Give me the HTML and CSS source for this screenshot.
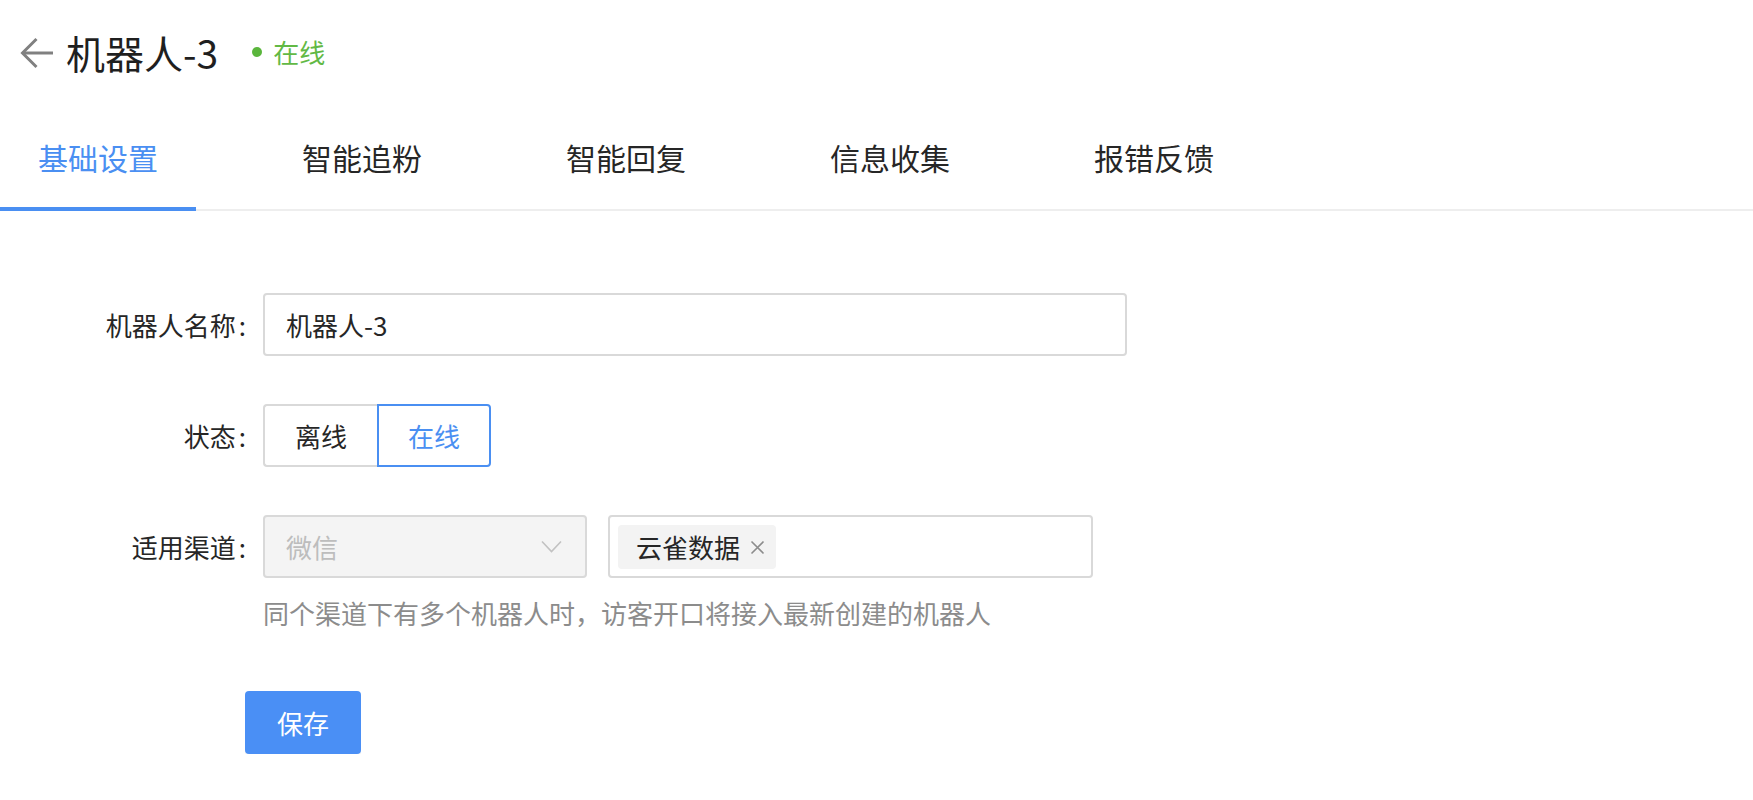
FILE: index.html
```html
<!DOCTYPE html>
<html lang="zh-CN">
<head>
<meta charset="utf-8">
<title>机器人-3</title>
<link rel="stylesheet" href="styles.css">
</head>
<body>
<div class="page">
  <header class="header">
    <span class="back">
      <svg width="34" height="34" viewBox="0 0 34 34" fill="none" stroke="#808080" stroke-width="3" stroke-linecap="butt" stroke-linejoin="miter">
        <path d="M34 17H3.5"/>
        <path d="M17.5 3L3.5 17l14 14"/>
      </svg>
    </span>
    <h1 class="title">机器人-3</h1>
    <span class="status"><span class="dot"></span>在线</span>
  </header>

  <nav class="tabs">
    <div class="tab active">基础设置</div>
    <div class="tab">智能追粉</div>
    <div class="tab">智能回复</div>
    <div class="tab">信息收集</div>
    <div class="tab">报错反馈</div>
  </nav>

  <div class="form">
    <div class="row">
      <div class="label">机器人名称<span class="colon">:</span></div>
      <div class="input">机器人-3</div>
    </div>

    <div class="row">
      <div class="label">状态<span class="colon">:</span></div>
      <div class="radio-group">
        <span class="radio">离线</span>
        <span class="radio checked">在线</span>
      </div>
    </div>

    <div class="row row-top">
      <div class="label">适用渠道<span class="colon">:</span></div>
      <div class="control">
        <div class="channel">
          <div class="select">
            <span class="placeholder">微信</span>
            <svg class="chevron" width="21" height="13" viewBox="0 0 21 13" fill="none" stroke="#c2c2c2" stroke-width="1.6">
              <path d="M1 1.5l9.5 10 9.5-10"/>
            </svg>
          </div>
          <div class="tags">
            <span class="tag">云雀数据<svg class="close" width="15" height="15" viewBox="0 0 15 15" stroke="#8c8c8c" stroke-width="1.6"><path d="M1.5 1.5l12 12M13.5 1.5l-12 12"/></svg></span>
          </div>
        </div>
        <div class="help">同个渠道下有多个机器人时，访客开口将接入最新创建的机器人</div>
      </div>
    </div>

    <div class="actions">
      <button class="btn" type="button">保存</button>
    </div>
  </div>
</div>
</body>
</html>
```

FILE: styles.css
```css
html, body {
  margin: 0;
  padding: 0;
  background: #ffffff;
}

body {
  font-family: "Noto Sans CJK SC", "Noto Sans", sans-serif;
  color: #262626;
}

.page {
  width: 100%;
}

.header {
  height: 104px;
  display: flex;
  align-items: center;
  padding-left: 19px;
  box-sizing: border-box;
}

.back {
  display: flex;
  width: 34px;
  height: 34px;
  margin-top: 1px;
}

.title {
  margin: 0 0 0 13px;
  font-size: 39px;
  font-weight: 400;
  color: #1f1f1f;
  line-height: 1;
}

.status {
  display: flex;
  align-items: center;
  margin-left: 34px;
  font-size: 26px;
  color: #62b945;
  line-height: 1;
}

.dot {
  width: 10px;
  height: 10px;
  border-radius: 50%;
  background: #5ab63c;
  margin-right: 11px;
}

.tabs {
  display: flex;
  gap: 68px;
  border-bottom: 2px solid #eeeeee;
  height: 105px;
}

.tab {
  height: 107px;
  box-sizing: border-box;
  padding: 3px 38px 0;
  display: flex;
  align-items: center;
  font-size: 30px;
  color: #262626;
  border-bottom: 4px solid transparent;
  line-height: 1;
}

.tab.active {
  color: #4a8ff2;
  border-bottom-color: #4a8ff2;
}

.form {
  padding-top: 82px;
  font-size: 26px;
}

.row {
  display: flex;
  align-items: center;
  margin-bottom: 48px;
}

.row-top {
  align-items: flex-start;
}

.label {
  width: 246px;
  height: 63px;
  line-height: 63px;
  text-align: right;
  padding-right: 17px;
  box-sizing: content-box;
  color: #262626;
  flex-shrink: 0;
}

.colon {
  margin-left: 3px;
}

.input {
  width: 864px;
  height: 63px;
  box-sizing: border-box;
  border: 2px solid #d9d9d9;
  border-radius: 4px;
  padding-left: 21px;
  line-height: 59px;
  color: #262626;
}

.radio-group {
  display: flex;
}

.radio {
  width: 114px;
  height: 63px;
  box-sizing: border-box;
  display: flex;
  align-items: center;
  justify-content: center;
  border: 2px solid #d9d9d9;
  color: #262626;
}

.radio:first-child {
  border-right: none;
  border-radius: 4px 0 0 4px;
}

.radio.checked {
  border-color: #4a8ff2;
  color: #4a8ff2;
  border-radius: 0 4px 4px 0;
}

.control {
  display: flex;
  flex-direction: column;
}

.channel {
  display: flex;
  gap: 21px;
}

.select {
  width: 324px;
  height: 63px;
  box-sizing: border-box;
  border: 2px solid #d9d9d9;
  border-radius: 4px;
  background: #f4f4f4;
  padding: 0 23px 0 21px;
  display: flex;
  align-items: center;
  justify-content: space-between;
}

.placeholder {
  color: #bdbdbd;
}

.chevron {
  display: block;
}

.tags {
  width: 485px;
  height: 63px;
  box-sizing: border-box;
  border: 2px solid #d9d9d9;
  border-radius: 4px;
  padding: 0 8px;
  display: flex;
  align-items: center;
}

.tag {
  height: 44px;
  box-sizing: border-box;
  padding: 0 11px 0 18px;
  background: #f3f3f3;
  border-radius: 4px;
  display: flex;
  align-items: center;
  color: #262626;
}

.close {
  display: block;
  margin-left: 10px;
  margin-top: 2px;
}

.help {
  margin-top: 17px;
  line-height: 36px;
  color: #8c8c8c;
}

.actions {
  padding-left: 245px;
  margin-top: -48px;
  padding-top: 60px;
}

.btn {
  width: 116px;
  height: 63px;
  border: none;
  border-radius: 4px;
  background: #4a8ff5;
  color: #ffffff;
  font-family: "Noto Sans CJK SC", "Noto Sans", sans-serif;
  font-size: 26px;
  padding: 0;
  box-shadow: 0 3px 0 rgba(0, 0, 0, 0.04);
  cursor: pointer;
}
```
